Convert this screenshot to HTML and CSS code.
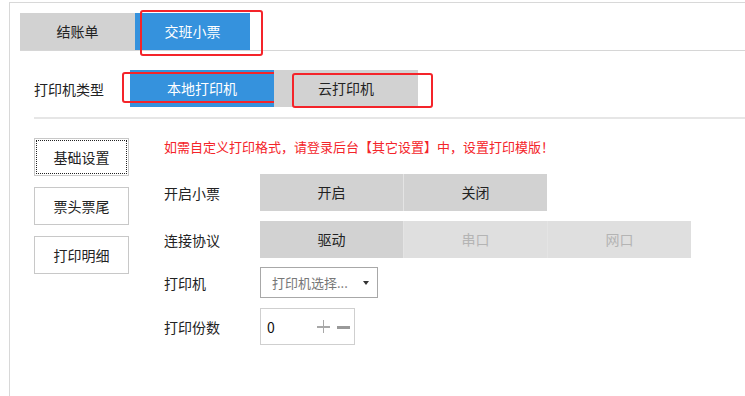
FILE: index.html
```html
<!DOCTYPE html>
<html lang="zh-CN">
<head>
    <meta charset="UTF-8">
    <title>交班小票</title>
    <link rel="stylesheet" href="styles.css">
</head>
<body>
    <div class="panel">
        <div class="tabs">
            <div class="tab">结账单</div>
            <div class="tab active">交班小票<span class="mark mark-tab"></span></div>
        </div>

        <div class="type-row">
            <span class="type-label">打印机类型</span>
            <div class="type-btns">
                <div class="type-btn active">本地打印机<span class="mark mark-local"></span></div>
                <div class="type-btn">云打印机<span class="mark mark-cloud"></span></div>
            </div>
        </div>

        <div class="content">
            <div class="side-menu">
                <div class="side-btn focused">基础设置</div>
                <div class="side-btn">票头票尾</div>
                <div class="side-btn">打印明细</div>
            </div>

            <div class="form">
                <p class="note">如需自定义打印格式，请登录后台【其它设置】中，设置打印模版！</p>

                <div class="form-row">
                    <span class="label">开启小票</span>
                    <div class="seg">
                        <div class="seg-item">开启</div>
                        <div class="seg-item">关闭</div>
                    </div>
                </div>

                <div class="form-row">
                    <span class="label">连接协议</span>
                    <div class="seg">
                        <div class="seg-item">驱动</div>
                        <div class="seg-item disabled">串口</div>
                        <div class="seg-item disabled">网口</div>
                    </div>
                </div>

                <div class="form-row row-select">
                    <span class="label">打印机</span>
                    <div class="select">
                        <span>打印机选择...</span>
                        <span class="arrow"></span>
                    </div>
                </div>

                <div class="form-row row-count">
                    <span class="label">打印份数</span>
                    <div class="counter">
                        <span class="count">0</span>
                        <span class="plus"></span>
                        <span class="minus"></span>
                    </div>
                </div>
            </div>
        </div>
    </div>
</body>
</html>
```

FILE: styles.css
```css
* {
    box-sizing: border-box;
}

body {
    margin: 0;
    background: #fff;
    color: #222;
    font-family: "Noto Sans CJK SC", "Liberation Sans", sans-serif;
    font-size: 14px;
    overflow: hidden;
}

.panel {
    margin: 2px 0 0 9px;
    height: 394px;
    border-top: 1px solid #d8d8d8;
    border-left: 1px solid #d8d8d8;
}

/* top tabs */
.tabs {
    display: flex;
    margin: 10px 0 0 10px;
    border-bottom: 1px solid #d6d6d6;
}

.tab {
    position: relative;
    width: 115px;
    height: 37px;
    line-height: 37px;
    text-align: center;
    background-color: #d2d2d2;
}

.tab.active {
    background-color: #3592dd;
    color: #fff;
}

/* red highlight frames */
.mark {
    position: absolute;
    border: 2px solid #f4242a;
    border-radius: 3px;
}

.mark-tab {
    left: 5px;
    top: -3px;
    width: 123px;
    height: 46px;
}

.mark-local {
    left: -8px;
    top: 2px;
    width: 160px;
    height: 31px;
}

.mark-cloud {
    left: 18px;
    top: 3px;
    width: 141px;
    height: 35px;
}

/* printer type */
.type-row {
    display: flex;
    align-items: center;
    margin: 19px 0 0 24px;
    padding-bottom: 10px;
    border-bottom: 2px solid #e6e6e6;
}

.type-label {
    width: 96px;
}

.type-btns {
    display: flex;
}

.type-btn {
    position: relative;
    width: 144px;
    height: 37px;
    line-height: 37px;
    text-align: center;
    background-color: #d2d2d2;
}

.type-btn.active {
    background-color: #3592dd;
    color: #fff;
}

/* body */
.content {
    display: flex;
    padding: 19px 0 0 24px;
}

.side-menu {
    display: flex;
    flex-direction: column;
    gap: 11px;
    width: 130px;
}

.side-btn {
    width: 95px;
    height: 38px;
    line-height: 36px;
    text-align: center;
    border: 1px solid #c8c8c8;
}

.side-btn.focused {
    outline: 1px dotted #222;
    outline-offset: -3px;
}

.note {
    margin: 0;
    height: 17px;
    line-height: 17px;
    font-size: 13px;
    color: #f4242a;
}

.form-row {
    display: flex;
    align-items: center;
    margin-top: 19px;
}

.form-row + .form-row {
    margin-top: 10px;
}

.form-row.row-select {
    margin-top: 9px;
}

.label {
    width: 96px;
}

.seg {
    display: flex;
    gap: 1px;
    background-color: #e4e4e4;
}

.seg-item {
    width: 143px;
    height: 37px;
    line-height: 37px;
    text-align: center;
    background-color: #d2d2d2;
}

.seg-item.disabled {
    background-color: #dfdfdf;
    color: #b4b4b4;
}

.select {
    display: flex;
    align-items: center;
    justify-content: space-between;
    width: 118px;
    height: 31px;
    padding: 0 8px 0 11px;
    border: 1px solid #a8a8a8;
    font-size: 13px;
    color: #777;
}

.arrow {
    width: 0;
    height: 0;
    border-left: 3px solid transparent;
    border-right: 3px solid transparent;
    border-top: 4px solid #333;
}

.counter {
    display: flex;
    align-items: center;
    width: 95px;
    height: 37px;
    padding: 0 4px 0 6px;
    border: 1px solid #cfcfcf;
}

.count {
    flex: 1;
    color: #111;
}

.plus,
.minus {
    position: relative;
    width: 13px;
    height: 13px;
    margin-left: 7px;
}

.plus::before,
.plus::after,
.minus::before {
    content: "";
    position: absolute;
    background-color: #a8a8a8;
}

.plus::before,
.minus::before {
    left: 0;
    top: 6px;
    width: 13px;
    height: 2px;
}

.minus::before {
    height: 3px;
    background-color: #999;
}

.plus::after {
    left: 6px;
    top: 0;
    width: 1px;
    height: 13px;
}
```
